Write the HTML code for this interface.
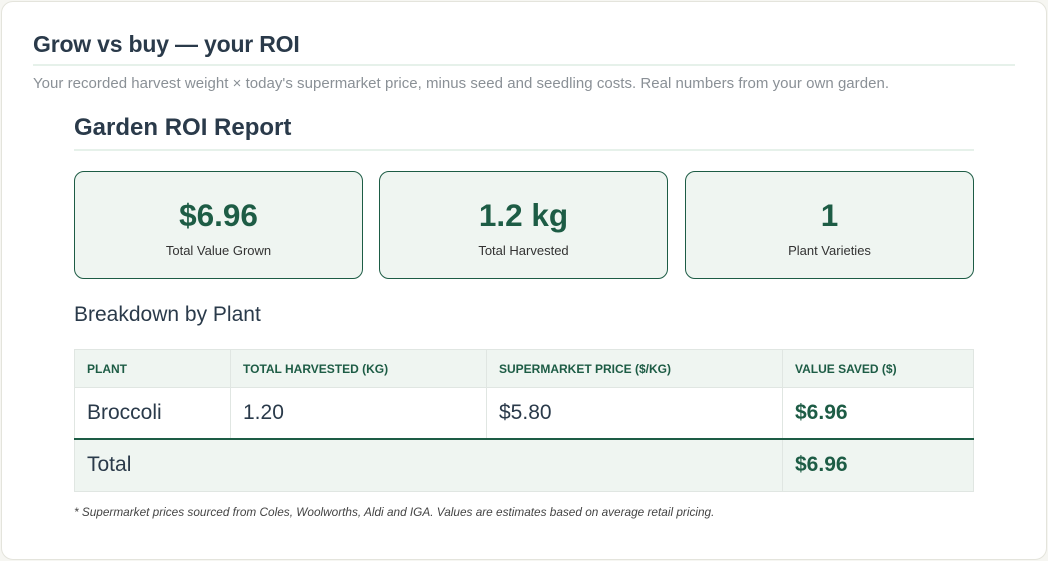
<!DOCTYPE html>
<html><head><style>
*{box-sizing:border-box;margin:0;padding:0}
body{width:1048px;height:561px;background:#f6f6f2;font-family:"Liberation Sans",sans-serif;position:relative;overflow:hidden}
.card{position:absolute;left:1px;top:1px;width:1046px;height:559px;background:#fff;border:1px solid #e4e4dc;border-radius:12px}
h1{position:absolute;left:33px;top:31px;font-size:23px;font-weight:bold;color:#2a3a4a;letter-spacing:-0.2px}
.l1{position:absolute;left:33px;top:64px;width:982px;height:2px;background:#e6f1ea}
.sub{position:absolute;left:33px;top:75px;font-size:15px;color:#8a9096;letter-spacing:0.03px}
h2{position:absolute;left:74px;top:114px;font-size:24px;font-weight:bold;color:#2a3a4a}
.l2{position:absolute;left:74px;top:149px;width:900px;height:2px;background:#e6f1ea}
.st{position:absolute;top:171px;width:289px;height:108px;background:#eff5f1;border:1px solid #1d5c45;border-radius:10px;text-align:center}
.st b{display:block;margin-top:25px;font-size:31.5px;color:#1d5c45}
.st span{display:block;margin-top:9px;font-size:13px;color:#333}
h3{position:absolute;left:74px;top:303px;font-size:21px;font-weight:normal;color:#2a3a4a}
table{position:absolute;left:74px;top:349px;width:900px;border-collapse:collapse}
td,th{border:1px solid #e0e6e2;padding:0 12px;text-align:left}
th{height:38px;background:#eff5f1;color:#1d5c45;font-size:12px;font-weight:bold}
.r td{height:51px;font-size:21px;color:#2a3a4a;background:#fff}
.t td{height:53px;font-size:21px;color:#2a3a4a;background:#eff5f1;border-top:2px solid #1d5c45}
.g{color:#1d5c45!important;font-weight:bold}
.note{position:absolute;left:74px;top:505px;font-size:11.8px;font-style:italic;color:#444}
</style></head><body>
<div class="card"></div>
<h1>Grow vs buy — your ROI</h1>
<div class="l1"></div>
<div class="sub">Your recorded harvest weight × today's supermarket price, minus seed and seedling costs. Real numbers from your own garden.</div>
<h2>Garden ROI Report</h2>
<div class="l2"></div>
<div class="st" style="left:74px"><b>$6.96</b><span>Total Value Grown</span></div>
<div class="st" style="left:379px"><b>1.2 kg</b><span>Total Harvested</span></div>
<div class="st" style="left:685px"><b>1</b><span>Plant Varieties</span></div>
<h3>Breakdown by Plant</h3>
<table>
<tr><th style="width:156px">PLANT</th><th style="width:256px">TOTAL HARVESTED (KG)</th><th style="width:296px">SUPERMARKET PRICE ($/KG)</th><th>VALUE SAVED ($)</th></tr>
<tr class="r"><td>Broccoli</td><td>1.20</td><td>$5.80</td><td class="g">$6.96</td></tr>
<tr class="t"><td colspan="3">Total</td><td class="g">$6.96</td></tr>
</table>
<div class="note">* Supermarket prices sourced from Coles, Woolworths, Aldi and IGA. Values are estimates based on average retail pricing.</div>
</body></html>
